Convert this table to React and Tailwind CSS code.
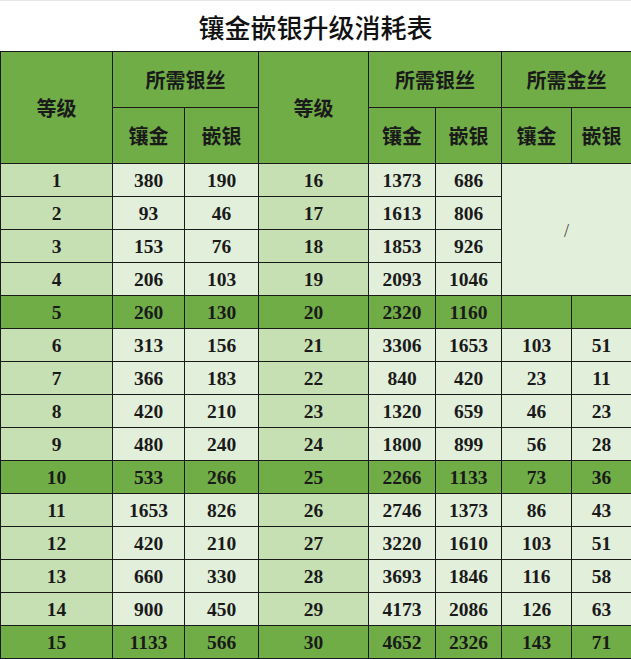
import React from 'react'

const left = [
  [1, 380, 190], [2, 93, 46], [3, 153, 76], [4, 206, 103], [5, 260, 130],
  [6, 313, 156], [7, 366, 183], [8, 420, 210], [9, 480, 240], [10, 533, 266],
  [11, 1653, 826], [12, 420, 210], [13, 660, 330], [14, 900, 450], [15, 1133, 566],
]

const right = [
  [16, 1373, 686], [17, 1613, 806], [18, 1853, 926], [19, 2093, 1046], [20, 2320, 1160],
  [21, 3306, 1653, 103, 51], [22, 840, 420, 23, 11], [23, 1320, 659, 46, 23],
  [24, 1800, 899, 56, 28], [25, 2266, 1133, 73, 36], [26, 2746, 1373, 86, 43],
  [27, 3220, 1610, 103, 51], [28, 3693, 1846, 116, 58], [29, 4173, 2086, 126, 63],
  [30, 4652, 2326, 143, 71],
]

const head = "border border-[#1a1a1a] bg-[#70ad47] text-[20px] font-bold text-[#1a1a1a] text-center"
const cell = "border border-[#1a1a1a] text-center p-0 pt-[2px] leading-none"

export default function App() {
  return (
    <div className="w-[631px] h-[659px] bg-white overflow-hidden">
      <div className="h-[51px] flex items-center justify-center border-t border-[#e5e5e5] text-[26px] font-medium text-[#111] font-['Noto_Sans_CJK_SC',sans-serif]">
        镶金嵌银升级消耗表
      </div>
      <table className="table-fixed border-collapse w-[631px] font-['Noto_Sans_CJK_SC',sans-serif]">
        <colgroup>
          <col className="w-[112px]" />
          <col className="w-[72px]" />
          <col className="w-[74px]" />
          <col className="w-[110px]" />
          <col className="w-[67px]" />
          <col className="w-[66px]" />
          <col className="w-[70px]" />
          <col className="w-[60px]" />
        </colgroup>
        <thead>
          <tr className="h-[56px]">
            <th rowSpan={2} className={head}>等级</th>
            <th colSpan={2} className={head}>所需银丝</th>
            <th rowSpan={2} className={head}>等级</th>
            <th colSpan={2} className={head}>所需银丝</th>
            <th colSpan={2} className={head}>所需金丝</th>
          </tr>
          <tr className="h-[56px]">
            <th className={head}>镶金</th>
            <th className={head}>嵌银</th>
            <th className={head}>镶金</th>
            <th className={head}>嵌银</th>
            <th className={head}>镶金</th>
            <th className={head}>嵌银</th>
          </tr>
        </thead>
        <tbody className="font-['Liberation_Serif',serif] font-bold text-[19.5px] text-[#1a1a1a]">
          {left.map((l, i) => {
            const r = right[i]
            const hot = (i + 1) % 5 === 0
            const lv = hot ? 'bg-[#70ad47]' : 'bg-[#c6e0b4]'
            const dv = hot ? 'bg-[#70ad47]' : 'bg-[#e2efda]'
            return (
              <tr key={i} className="h-[33px]">
                <td className={`${cell} ${lv}`}>{l[0]}</td>
                <td className={`${cell} ${dv}`}>{l[1]}</td>
                <td className={`${cell} ${dv}`}>{l[2]}</td>
                <td className={`${cell} ${lv}`}>{r[0]}</td>
                <td className={`${cell} ${dv}`}>{r[1]}</td>
                <td className={`${cell} ${dv}`}>{r[2]}</td>
                {i === 0 && (
                  <td rowSpan={4} colSpan={2} className={`${cell} bg-[#e2efda] font-normal text-[18px] text-[#444]`}>
                    /
                  </td>
                )}
                {i >= 4 && (
                  <>
                    <td className={`${cell} ${dv}`}>{r[3]}</td>
                    <td className={`${cell} ${dv}`}>{r[4]}</td>
                  </>
                )}
              </tr>
            )
          })}
        </tbody>
      </table>
    </div>
  )
}
